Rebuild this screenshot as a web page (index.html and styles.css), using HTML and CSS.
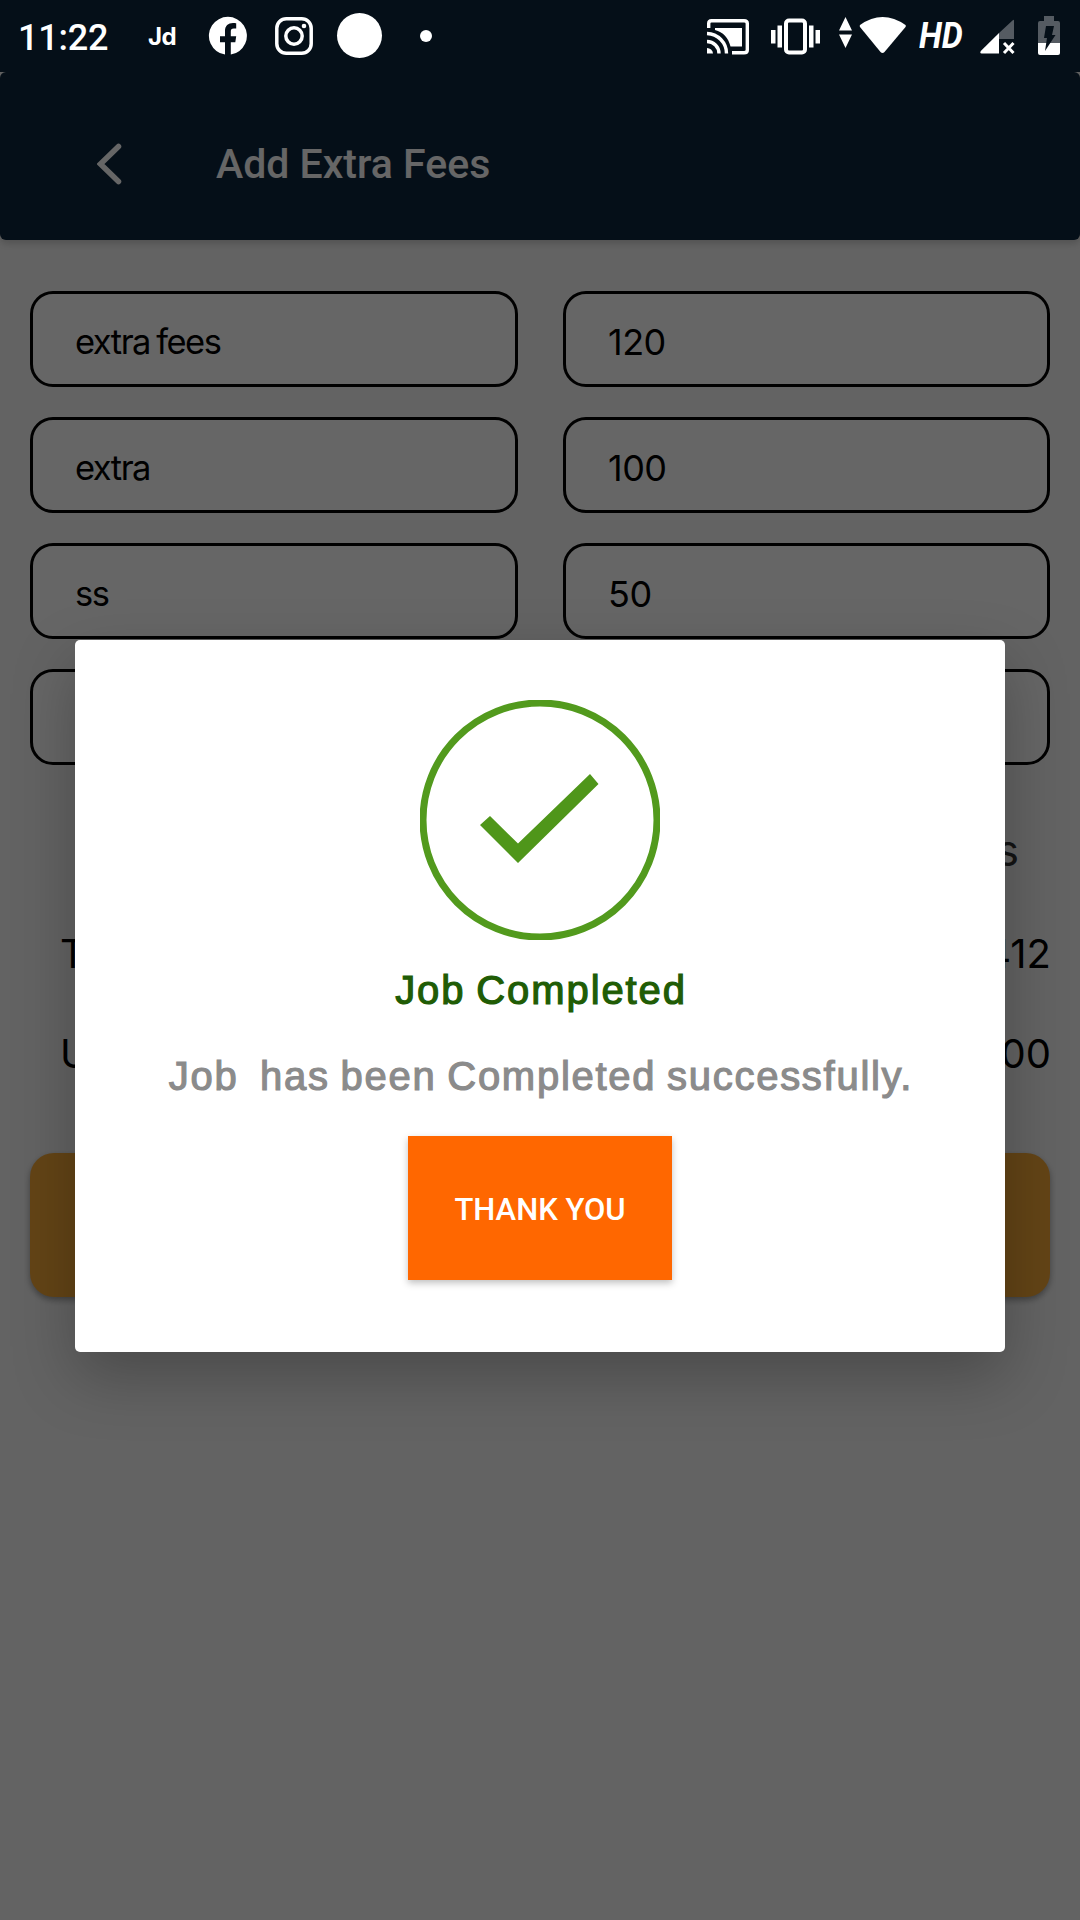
FILE: index.html
```html
<!DOCTYPE html>
<html lang="en">
<head>
<meta charset="utf-8">
<title>Add Extra Fees</title>
<link rel="stylesheet" href="styles.css">
</head>
<body>
<div class="status">
  <span class="clock">11:22</span>
  <span class="jd">Jd</span>
  <svg class="fb" width="38" height="40" viewBox="0 0 38 40"><path fill="#fff" d="M16 37.600V25.200h-5v-6h5v-5c0-5.500 3.200-8.200 8-8.200 1.400 0 2.700.2 3.200.3v5.300h-2.400c-2.400 0-3 1.200-3 3v4.600h5.400l-.9 6h-4.500v12.400A19 19 0 1 0 16 37.600z"/></svg>
  <svg class="ig" width="38" height="38" viewBox="0 0 38 38" fill="none" stroke="#fff" stroke-width="3.500"><rect x="1.800" y="1.800" width="34.400" height="34.400" rx="9.500"/><circle cx="19" cy="19" r="8.200"/><circle cx="29" cy="9" r="2.300" fill="#fff" stroke="none"/></svg>
  <span class="ball"></span>
  <span class="dot"></span>
  <span class="grow"></span>
  <svg class="cast" width="42" height="36" viewBox="0 0 42 36" fill="none" stroke="#fff" stroke-width="3.400"><path d="M1.700 9V4.500Q1.700 1.700 4.500 1.700H37Q40.300 1.700 40.300 4.500V31Q40.300 33.800 37 33.800H25"/><path fill="#fff" stroke="none" d="M8 9h27v18.500H23.500C21.500 19 16 13 8 11z"/><path d="M0 14.500A20 20 0 0 1 19.500 34.500M0 22.500A12 12 0 0 1 12 34.500"/><path fill="#fff" stroke="none" d="M0 29a6 6 0 0 1 6 5.500H0z"/></svg>
  <svg class="vib" width="50" height="38" viewBox="0 0 50 38"><rect x="15" y="2.500" width="19" height="32" rx="3" fill="none" stroke="#fff" stroke-width="4"/><path fill="#fff" d="M0 12h4.500v13.500H0zM6.500 7.500H11v22H6.500zM38 7.500h4.500v22H38zM44.500 12H49v13.500h-4.500z"/></svg>
  <svg class="wifi" width="68" height="38" viewBox="0 0 68 38" fill="#fff"><path d="M6.500 0L13 13.500H0zM0 17.500h13L6.500 31z"/><path d="M21 8Q43.500-8 66.500 8 67.200 9 66.500 10L45.500 35Q43.500 37 41.500 35L21 10Q20.400 9 21 8z"/></svg>
  <span class="hd">HD</span>
  <svg class="signal" width="35" height="36" viewBox="0 0 35 36"><path fill="#555b62" d="M32.500 1.500Q34 0 34 2V20H19V14z"/><path fill="#fff" d="M19 14V34.500H1.500Q-.5 34 .8 32z"/><path stroke="#fff" stroke-width="3" d="M24 24l9.500 10M33.500 24L24 34"/></svg>
  <svg class="battery" width="22" height="39" viewBox="0 0 22 39"><path fill="#555b62" d="M6 0h10v5h4q2 0 2 2v20H0V7q0-2 2-2h4z"/><path fill="#fff" d="M0 27h22v10q0 2-2 2H2q-2 0-2-2z"/><path fill="#050f18" d="M8 10h8l-2 9h3.500L7 35l2-13H6z"/></svg>
</div>
<div class="app">
  <header class="bar">
    <svg class="back" width="26" height="42" viewBox="0 0 26 42"><path d="M21.500 3.500L3.500 21l18 17.500" fill="none" stroke="#fff" stroke-width="5.500" stroke-linecap="round" stroke-linejoin="miter"/></svg>
    <h1 class="title">Add Extra Fees</h1>
  </header>
  <main class="content">
    <div class="fields">
      <div class="field">extra fees</div><div class="field amount">120</div>
      <div class="field">extra</div><div class="field amount">100</div>
      <div class="field">ss</div><div class="field amount">50</div>
      <div class="field"></div><div class="field amount"></div>
    </div>
    <div class="more">s</div>
    <div class="row"><span>T</span><span>412</span></div>
    <div class="row"><span>U</span><span>00</span></div>
    <div class="submit"></div>
  </main>
</div>
<div class="scrim">
  <section class="dialog">
    <svg class="tick" width="240" height="240" viewBox="0 0 240 240"><circle cx="120" cy="120" r="117" fill="none" stroke="#529a1d" stroke-width="7"/><path fill="#4f961a" d="M60 125l10-9 28 27.500 72-69.500 8.500 10L98 163z"/></svg>
    <h2 class="heading">Job Completed</h2>
    <p class="message">Job&nbsp; has been Completed successfully.</p>
    <button class="thanks">THANK YOU</button>
  </section>
</div>
</body>
</html>
```
FILE: styles.css
```css
* { box-sizing: border-box; }
body { margin: 0; width: 1080px; height: 1920px; overflow: hidden; background: #f8f8f8; font-family: Inter, sans-serif; color: #000; }
.status { position: absolute; inset: 0 0 auto 0; z-index: 3; height: 72px; display: flex; align-items: flex-start; background: #050f18; color: #fff; font-family: Roboto, sans-serif; }
.status svg { flex: none; overflow: visible; }
.clock { width: 128px; padding-left: 18px; font-size: 36px; font-weight: 500; line-height: 42px; margin-top: 17px; letter-spacing: -.2px; }
.jd { width: 61px; margin: 21px 0 0 20px; font: 700 24px/32px Inter, sans-serif; letter-spacing: -.5px; }
.fb { margin-top: 17px; }
.ig { margin: 17px 0 0 28px; }
.ball { width: 45px; height: 45px; margin: 13px 0 0 24px; border-radius: 50%; background: #fff; }
.dot { width: 12px; height: 12px; margin: 30px 0 0 38px; border-radius: 50%; background: #fff; }
.grow { flex: 1; }
.cast { margin: 19px 22px 0 0; }
.vib { margin: 18px 18px 0 0; }
.wifi { margin: 17px 12px 0 0; }
.hd { width: 48px; margin-right: 13px; font: italic 700 37px/40px Roboto, sans-serif; margin-top: 16px; transform: scaleX(.9); transform-origin: left; }
.signal { margin: 19px 23px 0 0; }
.battery { margin: 16px 20px 0 0; }
.app { padding-top: 72px; }
.bar { height: 168px; display: flex; align-items: center; padding: 16px 0 0 97px; border-radius: 6px; background: #0d263c; box-shadow: 0 3px 9px rgba(0,0,0,.2); }
.title { margin: 0 0 0 93px; color: #fff; font: 500 41px/50px Roboto, sans-serif; }
.content { padding: 51px 30px 0; }
.fields { display: grid; grid-template-columns: 488px 487px; column-gap: 45px; row-gap: 30px; }
.field { height: 96px; padding: 3px 42px 0; border: 3px solid #000; border-radius: 23px; background: #fff; font-size: 34.500px; line-height: 90px; letter-spacing: -1.500px; word-spacing: -2px; }
.amount { font-size: 36px; letter-spacing: -.5px; }
.more { height: 100px; margin-top: 35px; padding-right: 31px; text-align: right; font-size: 43px; line-height: 100px; color: #333; }
.row { display: flex; justify-content: space-between; height: 100px; padding-left: 30px; font-size: 40px; line-height: 100px; }
.more + .row { margin-top: 4px; }
.row span:last-child { margin-right: -1px; }
.submit { height: 144px; margin-top: 49px; border-radius: 24px; background: #f8ab38; box-shadow: 0 3px 6px rgba(0,0,0,.35); }
.scrim { position: absolute; inset: 72px 0 0 0; z-index: 2; padding-top: 568px; background: rgba(0,0,0,.6); }
.dialog { width: 930px; height: 712px; margin: 0 auto; padding-top: 60px; display: flex; flex-direction: column; align-items: center; border-radius: 5px; background: #fff; box-shadow: 0 24px 62px rgba(0,0,0,.26); }
.tick { display: block; flex: none; }
.heading, .message { margin: 0; padding-left: 2px; font: 400 40px/50px "Liberation Sans", sans-serif; white-space: nowrap; word-spacing: -2px; }
.heading { margin-top: 25px; letter-spacing: 1.900px; color: #205c05; -webkit-text-stroke: 1.200px #205c05; }
.message { margin-top: 36px; letter-spacing: 1.720px; color: #8b8b8b; -webkit-text-stroke: 1.200px #8b8b8b; }
.thanks { width: 264px; height: 144px; margin: 35px 0 0; padding: 4px 0 0; border: 0; background: #ff6700; color: #fff; font: 500 31px/36px Roboto, sans-serif; box-shadow: 0 3px 7px rgba(0,0,0,.25); }
```
